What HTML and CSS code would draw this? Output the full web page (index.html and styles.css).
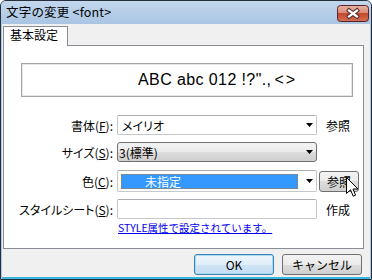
FILE: index.html
```html
<!DOCTYPE html>
<html lang="ja">
<head>
<meta charset="utf-8">
<link rel="stylesheet" href="styles.css">
</head>
<body>
<div class="window">
  <div class="titlebar">
    <span class="title">文字の変更 &lt;font&gt;</span>
    <div class="close">
      <svg width="32" height="17" viewBox="0 0 32 17">
        <defs>
          <linearGradient id="cg" x1="0" y1="0" x2="0" y2="1">
            <stop offset="0" stop-color="#e9b0a2"/>
            <stop offset="0.5" stop-color="#d98a74"/>
            <stop offset="0.5" stop-color="#c4482c"/>
            <stop offset="1" stop-color="#d37257"/>
          </linearGradient>
        </defs>
        <rect x="0.5" y="0.5" width="31" height="16" rx="3" fill="url(#cg)" stroke="#5b2426"/>
        <path d="M12 5.5 L20 11.5 M20 5.5 L12 11.5" stroke="#4d2b2b" stroke-width="4.2" stroke-linecap="square"/>
        <path d="M12 5.5 L20 11.5 M20 5.5 L12 11.5" stroke="#ffffff" stroke-width="2.2" stroke-linecap="square"/>
      </svg>
    </div>
  </div>
  <div class="client">
    <div class="tabs"><div class="tab">基本設定</div></div>
    <div class="panel">
      <div class="preview">ABC abc 012 !?".,<span class="angles">&lt;&gt;</span></div>
      <div class="form">
        <div class="row">
          <span class="label">書体(<u>F</u>):</span>
          <div class="field"><span class="value">メイリオ</span><i class="arrow"></i></div>
          <span class="side">参照</span>
        </div>
        <div class="row size">
          <span class="label">サイズ(<u>S</u>):</span>
          <div class="field select"><span class="value">3(標準)</span><i class="arrow"></i></div>
        </div>
        <div class="row color">
          <span class="label">色(<u>C</u>):</span>
          <div class="field tall"><span class="swatch">未指定</span><i class="arrow"></i></div>
          <button class="small-btn">参照</button>
        </div>
        <div class="row style">
          <span class="label">スタイルシート(<u>S</u>):</span>
          <div class="field"></div>
          <span class="side">作成</span>
        </div>
        <div class="link">STYLE属性で設定されています。</div>
      </div>
    </div>
    <div class="buttons">
      <button class="btn default">OK</button>
      <button class="btn">キャンセル</button>
    </div>
  </div>
</div>
<svg class="cursor" width="13" height="21" viewBox="0 0 13 21">
  <path d="M0.5 0.5 L0.5 16.5 L4.5 12.8 L7.2 19.2 L9.6 18.2 L7 12 L12 12 Z" fill="#ffffff" stroke="#000000" stroke-width="1" stroke-linejoin="miter"/>
</svg>
</body>
</html>
```
FILE: styles.css
```css
html, body {
  margin: 0;
  padding: 0;
}
body {
  width: 372px;
  height: 280px;
  overflow: hidden;
  position: relative;
  font-family: "Noto Sans CJK JP", "Liberation Sans", sans-serif;
  font-size: 12px;
  color: #000;
}
.window {
  box-sizing: border-box;
  width: 372px;
  height: 280px;
  border: 1px solid #25303c;
  border-radius: 6px 6px 0 0;
  background: #aac7e4;
  display: flex;
  flex-direction: column;
  overflow: hidden;
}
.titlebar {
  flex: none;
  height: 23px;
  display: flex;
  align-items: flex-start;
  padding: 0 2px 0 5px;
  background: linear-gradient(#c3d7ed, #a9c5e3);
}
.title {
  line-height: 22px;
  font-size: 12.5px;
  letter-spacing: 0.2px;
}
.close {
  margin-left: auto;
  margin-top: 4px;
  height: 17px;
}
.close svg {
  display: block;
}
.client {
  flex: 1;
  margin: 0 1px;
  background: #f0f0f0;
  border-bottom: 2px solid #3ab6db;
  display: flex;
  flex-direction: column;
}
.tabs {
  flex: none;
  display: flex;
  padding: 2px 0 0 1px;
}
.tab {
  position: relative;
  z-index: 1;
  box-sizing: border-box;
  width: 65px;
  height: 20px;
  margin-bottom: -1px;
  border: 1px solid #898c95;
  border-bottom: none;
  background: #fff;
  padding-left: 6px;
  line-height: 16px;
  font-size: 12px;
}
.panel {
  flex: none;
  box-sizing: border-box;
  width: 361px;
  height: 204px;
  margin-left: 1px;
  border: 1px solid #898c95;
  background: #fff;
}
.preview {
  box-sizing: border-box;
  width: 332px;
  height: 34px;
  margin: 17px 0 0 17px;
  border: 1px solid #a5a5a5;
  box-shadow: inset 0 0 0 1px #e6e6e6;
  display: flex;
  align-items: center;
  padding-left: 116px;
  font-family: "Liberation Sans", Arial, sans-serif;
  font-size: 16px;
  letter-spacing: 0.4px;
  white-space: pre;
}
.angles {
  margin-left: 3px;
  letter-spacing: 2px;
}
.form {
  margin-top: 18px;
}
.row {
  display: flex;
  align-items: center;
  height: 20px;
  margin-bottom: 7px;
}
.row.size {
  margin-bottom: 8px;
}
.row.color {
  height: 22px;
}
.row.style {
  margin-bottom: 2px;
}
.label {
  width: 109px;
  margin-right: 4px;
  text-align: right;
  white-space: nowrap;
  font-feature-settings: "palt";
}
.label u {
  text-underline-offset: 1px;
}
.field {
  box-sizing: border-box;
  width: 200px;
  height: 20px;
  flex: none;
  border: 1px solid #c4c7cc;
  border-top-color: #abadb3;
  border-radius: 2px;
  background: #fff;
  display: flex;
  align-items: center;
}
.field.tall {
  height: 22px;
}
.value {
  padding-left: 4px;
  font-feature-settings: "palt";
}
.field.select {
  border: 1px solid #707070;
  border-radius: 3px;
  background: linear-gradient(#f3f3f3 0%, #ebebeb 50%, #dddddd 50%, #cfcfcf 100%);
}
.field.select .value {
  padding-left: 1px;
}
.arrow {
  display: block;
  width: 7px;
  height: 4px;
  margin-left: auto;
  margin-right: 3px;
  background: #000;
  clip-path: polygon(0 0, 100% 0, 50% 100%);
}
.swatch {
  box-sizing: border-box;
  width: 177px;
  height: 15px;
  margin-left: 3px;
  border: 1px dotted #b8793e;
  background: #3399ff;
  color: #fff;
  padding-left: 23px;
  line-height: 13px;
}
.side {
  margin-left: 9px;
}
.small-btn {
  box-sizing: border-box;
  width: 40px;
  height: 21px;
  margin-left: 2px;
  padding: 0;
  border: 1px solid #707070;
  border-radius: 3px;
  background: linear-gradient(#f3f3f3 0%, #ebebeb 50%, #dddddd 50%, #cfcfcf 100%);
  font-family: "Noto Sans CJK JP", sans-serif;
  font-size: 12px;
  color: #000;
}
.link {
  margin-left: 114px;
  line-height: 13px;
  font-size: 10.5px;
  color: #0000ee;
  text-decoration: underline;
}
.buttons {
  flex: 1;
  display: flex;
  justify-content: flex-end;
  align-items: flex-start;
  gap: 8px;
  padding: 5px 8px 0 0;
}
.btn {
  box-sizing: border-box;
  width: 80px;
  height: 21px;
  padding: 0;
  border: 1px solid #707070;
  border-radius: 3px;
  background: linear-gradient(#f3f3f3 0%, #ebebeb 50%, #dddddd 50%, #cfcfcf 100%);
  font-family: "Noto Sans CJK JP", sans-serif;
  font-size: 12px;
  color: #000;
}
.btn.default {
  border-color: #3c7fb1;
  box-shadow: inset 0 0 0 1px #a9dcf6;
  background: linear-gradient(#eef6fc 0%, #e0eef9 50%, #d0e5f5 50%, #c3ddf2 100%);
}
.cursor {
  position: absolute;
  left: 346px;
  top: 177px;
}
```
